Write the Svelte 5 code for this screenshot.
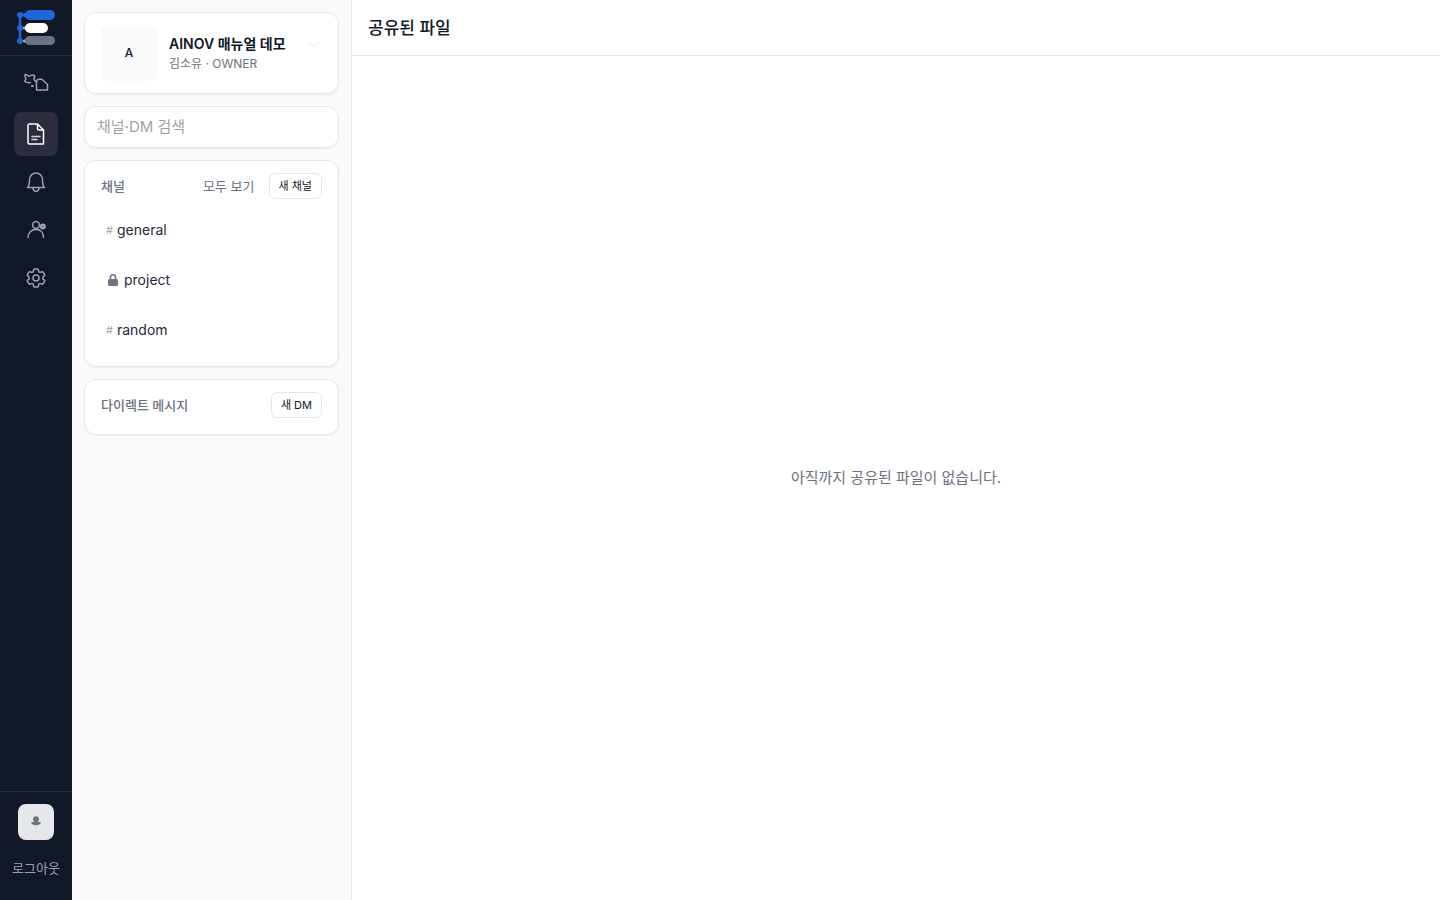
<script>
  const channels = [
    { name: 'general', locked: false },
    { name: 'project', locked: true },
    { name: 'random', locked: false }
  ];
  let query = $state('');
</script>

<div class="app">
  <nav class="rail" aria-label="AINOV">
    <a class="logo" href="#home" aria-label="AINOV">
      <svg width="40" height="38" viewBox="0 0 40 38" aria-hidden="true">
        <path d="M4 6v26M4 6h8" stroke="#2166db" stroke-width="2.4" fill="none" />
        <path d="M5 19l5-2v4zM5 32l5-2v4z" fill="#9fb4dc" />
        <path d="M4 6l7-3v6z" fill="#2166db" />
        <rect x="9" y="1" width="30" height="10" rx="5" fill="#2166db" />
        <rect x="9" y="14" width="23" height="10" rx="5" fill="#fff" />
        <rect x="9" y="27" width="30" height="9" rx="4.500" fill="#6b7082" />
        <path d="M18 34h1m5 0h1m3-1h1m3 1h1" stroke="#5a86cf" />
        <circle cx="4" cy="6" r="3" fill="#2166db" />
        <circle cx="4" cy="19" r="3" fill="#2166db" />
        <circle cx="4" cy="32" r="3" fill="#2166db" />
      </svg>
    </a>
    <div class="items">
      <a class="item" href="#chat" aria-label="채널">
        <svg width="26" height="28" viewBox="0 0 26 28" aria-hidden="true">
          <path d="M2.200 2.500C4 2 4.800 3.500 6 4.500 7.500 3.300 9 2.800 10.500 3.300c1.800.6 1.500 1.500.6 2.700-.5.800-.3 1.400.3 2.200l2 1.800M2.200 2.500C1.200 4 2 5 2.800 6.200 3.200 7.300 2 8.300 1.800 9.500c1.500 1.200 3.500 1.300 5.700 1.100" />
          <path d="M13.500 18V9.500c.3-1.500 1.200-2.200 2.500-2.200h2c.8 0 1.300.4 2 1l4.500 4.200V18z" />
          <path d="M8.800 14h1" stroke-width="2" />
        </svg>
      </a>
      <a class="item active" href="#files" aria-label="공유된 파일" aria-current="page">
        <svg width="24" height="24" viewBox="0 0 24 24" aria-hidden="true">
          <path d="M5.500 2h8l6 6v14h-14a1.500 1.500 0 0 1-1.500-1.500v-17A1.500 1.500 0 0 1 5.500 2zM13.500 2v4.500A1.500 1.500 0 0 0 15 8h4.500" />
          <path d="M8 14.500h8M8 17.500h5" stroke="#d1d5db" />
        </svg>
      </a>
      <a class="item" href="#alerts" aria-label="알림">
        <svg width="24" height="24" viewBox="0 0 24 24" aria-hidden="true">
          <path d="M3.500 17.500c1.800-1.800 2-3.500 2-7.500 0-4 2.700-7 6.500-7s6.500 3 6.500 7c0 4 .2 5.700 2 7.500zM9 18c.2 4.500 5.800 4.500 6 0" />
        </svg>
      </a>
      <a class="item" href="#members" aria-label="멤버">
        <svg width="24" height="24" viewBox="0 0 24 24" aria-hidden="true">
          <circle cx="12" cy="7" r="3.400" />
          <path d="M4 19.500c0-4.700 3.200-8 8-8s7.500 3.300 7.500 8" />
          <circle cx="18.800" cy="8.500" r="3" fill="#9ca3af" stroke="none" />
          <circle cx="18.800" cy="8.500" r=".7" fill="#4b5563" stroke="none" />
        </svg>
      </a>
      <a class="item" href="#settings" aria-label="설정">
        <svg width="24" height="24" viewBox="0 0 24 24" aria-hidden="true">
          <path d="M9.600 3.900c.1-.5.500-.9 1.100-.9h2.600c.6 0 1 .4 1.100.9l.2 1.300c.1.400.3.700.6.900l.3.100c.3.200.7.200 1.100.1l1.200-.5c.5-.2 1.100 0 1.400.5l1.300 2.200c.3.500.2 1.100-.3 1.400l-1 .9c-.3.200-.4.600-.4 1v.3c0 .4.100.8.400 1l1 .8c.5.400.6 1 .3 1.500l-1.300 2.200c-.3.500-.9.700-1.400.5l-1.200-.5c-.4-.1-.8-.1-1.100.1l-.3.200c-.3.200-.5.500-.6.900l-.2 1.300c-.1.500-.5.900-1.100.9h-2.600c-.6 0-1-.4-1.100-.9l-.2-1.300c-.1-.4-.3-.7-.6-.9l-.3-.2c-.3-.2-.7-.2-1.100-.1l-1.200.5c-.5.2-1.100 0-1.400-.5l-1.300-2.200c-.3-.5-.2-1.100.3-1.500l1-.8c.3-.2.400-.6.400-1v-.3c0-.4-.1-.8-.4-1l-1-.9c-.5-.3-.6-.9-.3-1.400l1.300-2.200c.3-.5.9-.7 1.400-.5l1.200.5c.4.100.8.100 1.100-.1l.3-.1c.3-.2.5-.5.6-.9z" />
          <circle cx="12" cy="12" r="3" />
        </svg>
      </a>
    </div>
    <div class="account">
      <button class="me" type="button" aria-label="김소유">
        <svg width="12" height="12" viewBox="0 0 12 12" aria-hidden="true">
          <circle cx="6" cy="3.200" r="2.900" />
          <path d="M1 6h10c0 2-2 3.200-5 3.200S1 8 1 6z" />
        </svg>
      </button>
      <button class="logout" type="button">로그아웃</button>
    </div>
  </nav>

  <aside class="sidebar">
    <button class="card workspace" type="button">
      <span class="tile">A</span>
      <span class="who">
        <span class="title">AINOV 매뉴얼 데모</span>
        <span class="role">김소유 · OWNER</span>
      </span>
      <svg class="chevron" width="16" height="16" viewBox="0 0 16 16" aria-hidden="true">
        <path d="M3 6l5 4.500L13 6" />
      </svg>
    </button>

    <input class="card search" type="search" bind:value={query} placeholder="채널·DM 검색" aria-label="채널·DM 검색" />

    <section class="card">
      <header class="head">
        <h2>채널</h2>
        <a class="all" href="#all">모두 보기</a>
        <button class="small" type="button">새 채널</button>
      </header>
      <ul>
        {#each channels as channel}
          <li>
            <a href={'#' + channel.name}>
              {#if channel.locked}
                <svg class="lock" width="14" height="14" viewBox="0 0 14 14" aria-hidden="true">
                  <path d="M4.500 6.500V4.200a2.500 2.500 0 0 1 5 0v2.300" fill="none" stroke="#6b7280" stroke-width="1.500" />
                  <rect x="2" y="6" width="10" height="7" rx="1.500" fill="#6b7280" />
                </svg>
              {:else}
                <span class="hash">#</span>
              {/if}
              <span>{channel.name}</span>
            </a>
          </li>
        {/each}
      </ul>
    </section>

    <section class="card">
      <header class="head">
        <h2>다이렉트 메시지</h2>
        <button class="small" type="button">새 DM</button>
      </header>
    </section>
  </aside>

  <main>
    <header class="top"><h1>공유된 파일</h1></header>
    <div class="empty"><p>아직까지 공유된 파일이 없습니다.</p></div>
  </main>
</div>

<style>
  :global(body) {
    margin: 0;
  }
  .app {
    display: flex;
    min-height: 100vh;
    background: #fff;
    color: #111827;
    font-family: Inter, 'Noto Sans CJK KR', sans-serif;
    font-size: 14px;
    line-height: 20px;
  }
  .app * {
    box-sizing: border-box;
  }
  a {
    color: inherit;
    text-decoration: none;
  }
  button {
    margin: 0;
    font: inherit;
    cursor: pointer;
  }
  h1,
  h2,
  p,
  ul {
    margin: 0;
    padding: 0;
  }
  .rail {
    display: flex;
    flex: none;
    flex-direction: column;
    width: 72px;
    background: #111827;
    color: #9ca3af;
  }
  .logo {
    display: flex;
    align-items: center;
    justify-content: center;
    height: 56px;
    border-bottom: 1px solid #272d3b;
  }
  .items {
    display: flex;
    flex: 1;
    flex-direction: column;
    align-items: center;
    gap: 4px;
    padding: 8px 0;
  }
  .item {
    display: flex;
    align-items: center;
    justify-content: center;
    width: 44px;
    height: 44px;
    border-radius: 8px;
  }
  .item.active {
    background: #2b2d3e;
    color: #fff;
  }
  .item svg {
    fill: none;
    stroke: currentColor;
    stroke-width: 1.5;
    stroke-linejoin: round;
    stroke-linecap: round;
  }
  .account {
    display: flex;
    flex-direction: column;
    align-items: center;
    gap: 10px;
    padding: 12px 0 14px;
    border-top: 1px solid #272d3b;
  }
  .me {
    display: flex;
    align-items: center;
    justify-content: center;
    width: 36px;
    height: 36px;
    padding: 0;
    border: 0;
    border-radius: 8px;
    background: #e5e7eb;
    fill: #6b7280;
  }
  .logout {
    height: 36px;
    padding: 0;
    border: 0;
    background: none;
    color: #9ca3af;
    font-size: 13px;
    line-height: 16px;
  }
  .sidebar {
    display: flex;
    flex: none;
    flex-direction: column;
    gap: 12px;
    width: 280px;
    padding: 12px;
    border-right: 1px solid #e5e7eb;
    background: #f9fafb;
  }
  .card {
    width: 100%;
    padding: 12px 16px;
    border: 1px solid #e5e7eb;
    border-radius: 12px;
    background: #fff;
    box-shadow: 0 1px 2px rgb(0 0 0 / 5%);
    color: #111827;
  }
  .workspace {
    display: flex;
    align-items: center;
    gap: 12px;
    text-align: left;
  }
  .tile {
    display: flex;
    flex: none;
    align-items: center;
    justify-content: center;
    width: 56px;
    height: 56px;
    border-radius: 8px;
    background: #f9fafb;
    font-size: 12px;
    font-weight: 500;
  }
  .who {
    display: flex;
    flex: 1;
    flex-direction: column;
    min-width: 0;
    padding-top: 2px;
    white-space: nowrap;
  }
  .title {
    font-weight: 600;
  }
  .role {
    color: #6b7280;
    font-size: 12px;
  }
  .chevron {
    align-self: flex-start;
    margin-top: 11px;
    fill: none;
    stroke: #e5e7eb;
  }
  .search {
    height: 42px;
    margin: 0;
    padding: 0 12px 2px;
    outline: 0;
    appearance: none;
    font: inherit;
    font-size: 15px;
  }
  .search::placeholder {
    color: #9ca3af;
    opacity: 1;
  }
  .head {
    display: flex;
    align-items: center;
    gap: 14px;
    margin-bottom: 4px;
  }
  h2 {
    flex: 1;
    color: #6b7280;
    font-size: 13px;
    font-weight: 500;
    line-height: 18px;
  }
  .all {
    color: #6b7280;
    font-size: 13px;
    line-height: 18px;
  }
  .small {
    height: 26px;
    padding: 0 9px;
    border: 1px solid #e5e7eb;
    border-radius: 6px;
    background: #fff;
    color: #111827;
    font-size: 11px;
    line-height: 16px;
  }
  ul {
    padding-top: 3px;
    list-style: none;
  }
  li + li {
    margin-top: 2px;
  }
  li a {
    display: flex;
    align-items: center;
    gap: 4px;
    height: 48px;
    padding: 0 5px;
    color: #1f2937;
  }
  .hash {
    color: #9ca3af;
    font-size: 11px;
  }
  main {
    display: flex;
    flex: 1;
    flex-direction: column;
    min-width: 0;
  }
  .top {
    display: flex;
    align-items: center;
    height: 56px;
    padding: 0 16px;
    border-bottom: 1px solid #e5e7eb;
  }
  h1 {
    font-size: 17px;
    font-weight: 500;
    line-height: 24px;
  }
  .empty {
    display: flex;
    flex: 1;
    align-items: center;
    justify-content: center;
    color: #6b7280;
    font-size: 15px;
  }
</style>
